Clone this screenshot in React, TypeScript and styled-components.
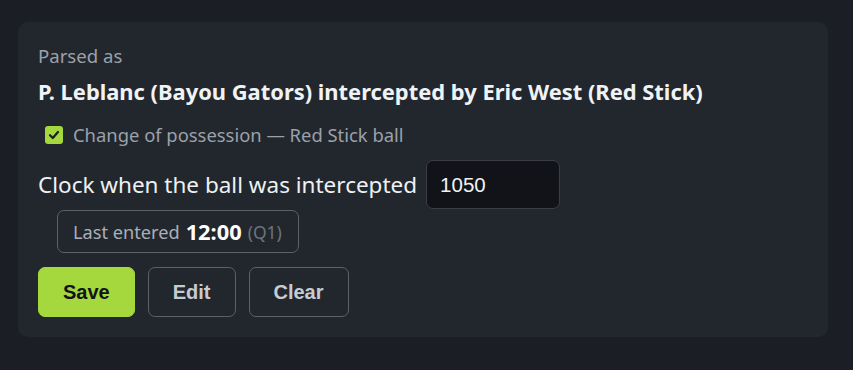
import React, { useState } from "react";
import styled, { createGlobalStyle } from "styled-components";

const GlobalStyle = createGlobalStyle`
  html, body {
    margin: 0;
    padding: 0;
    background: #1b1f25;
    font-family: "Noto Sans", "Open Sans", sans-serif;
  }
`;

const Page = styled.div`
  padding: 22px 25px 33px 18px;
`;

const Card = styled.div`
  background-color: #22272e;
  border-radius: 10px;
  padding: 21px 20px 20px 20px;
  display: flex;
  flex-direction: column;
`;

const Caption = styled.div`
  color: #9ba1a9;
  font-size: 18.6px;
  line-height: 26px;
`;

const Title = styled.div`
  color: #f0f3f6;
  font-size: 21.9px;
  font-weight: 700;
  line-height: 28px;
  margin-top: 9px;
  white-space: nowrap;
`;

const CheckRow = styled.label`
  display: flex;
  align-items: center;
  gap: 10px;
  margin: 16px 0 0 7px;
  color: #9ba1a9;
  font-size: 18.4px;
  line-height: 26px;
`;

const CheckBox = styled.span`
  width: 18px;
  height: 18px;
  border-radius: 3px;
  background: #a4d83c;
  display: flex;
  align-items: center;
  justify-content: center;
`;

const ClockRow = styled.div`
  display: flex;
  align-items: center;
  gap: 9px;
  margin-top: 12px;
`;

const ClockLabel = styled.span`
  color: #eef1f4;
  font-size: 22.5px;
  white-space: nowrap;
`;

const ClockInput = styled.input`
  width: 134px;
  height: 49px;
  box-sizing: border-box;
  background: #111318;
  border: 1px solid #3a3f47;
  border-radius: 7px;
  color: #f0f3f6;
  font-family: "Liberation Sans", Arial, sans-serif;
  font-size: 20.5px;
  padding: 0 13px;
  outline: none;
`;

const LastPill = styled.div`
  align-self: flex-start;
  margin: 1px 0 0 19px;
  height: 43px;
  box-sizing: border-box;
  padding: 0 16px 0 15px;
  border: 1px solid #5b616a;
  border-radius: 7px;
  display: flex;
  align-items: center;
  gap: 6px;
  font-size: 18.2px;
  color: #a9afb7;
  white-space: nowrap;
`;

const Strong = styled.strong`
  color: #ffffff;
  font-size: 21.8px;
  font-weight: 700;
`;

const Muted = styled.span`
  color: #6d737b;
  font-size: 17.5px;
`;

const Actions = styled.div`
  display: flex;
  gap: 13px;
  margin-top: 14px;
`;

const Button = styled.button<{ $primary?: boolean }>`
  height: 50px;
  box-sizing: border-box;
  padding: 0 24px;
  border-radius: 7px;
  font-family: "Liberation Sans", Arial, sans-serif;
  font-size: 20px;
  font-weight: 700;
  cursor: pointer;
  background: ${(p) => (p.$primary ? "#a4d83c" : "transparent")};
  color: ${(p) => (p.$primary ? "#111318" : "#c7ccd3")};
  border: 1px solid ${(p) => (p.$primary ? "#a4d83c" : "#5b616a")};
`;

export default function App() {
  const [clock, setClock] = useState("1050");
  return (
    <>
      <GlobalStyle />
      <Page>
        <Card>
          <Caption>Parsed as</Caption>
          <Title>P. Leblanc (Bayou Gators) intercepted by Eric West (Red Stick)</Title>
          <CheckRow>
            <CheckBox>
              <svg width="12" height="12" viewBox="0 0 12 12">
                <path d="M2 6.2 L4.8 9 L10 3" fill="none" stroke="#1b1f25" strokeWidth="2.2" strokeLinecap="round" strokeLinejoin="round" />
              </svg>
            </CheckBox>
            Change of possession — Red Stick ball
          </CheckRow>
          <ClockRow>
            <ClockLabel>Clock when the ball was intercepted</ClockLabel>
            <ClockInput value={clock} onChange={(e) => setClock(e.target.value)} />
          </ClockRow>
          <LastPill>
            Last entered <Strong>12:00</Strong> <Muted>(Q1)</Muted>
          </LastPill>
          <Actions>
            <Button $primary>Save</Button>
            <Button>Edit</Button>
            <Button>Clear</Button>
          </Actions>
        </Card>
      </Page>
    </>
  );
}
